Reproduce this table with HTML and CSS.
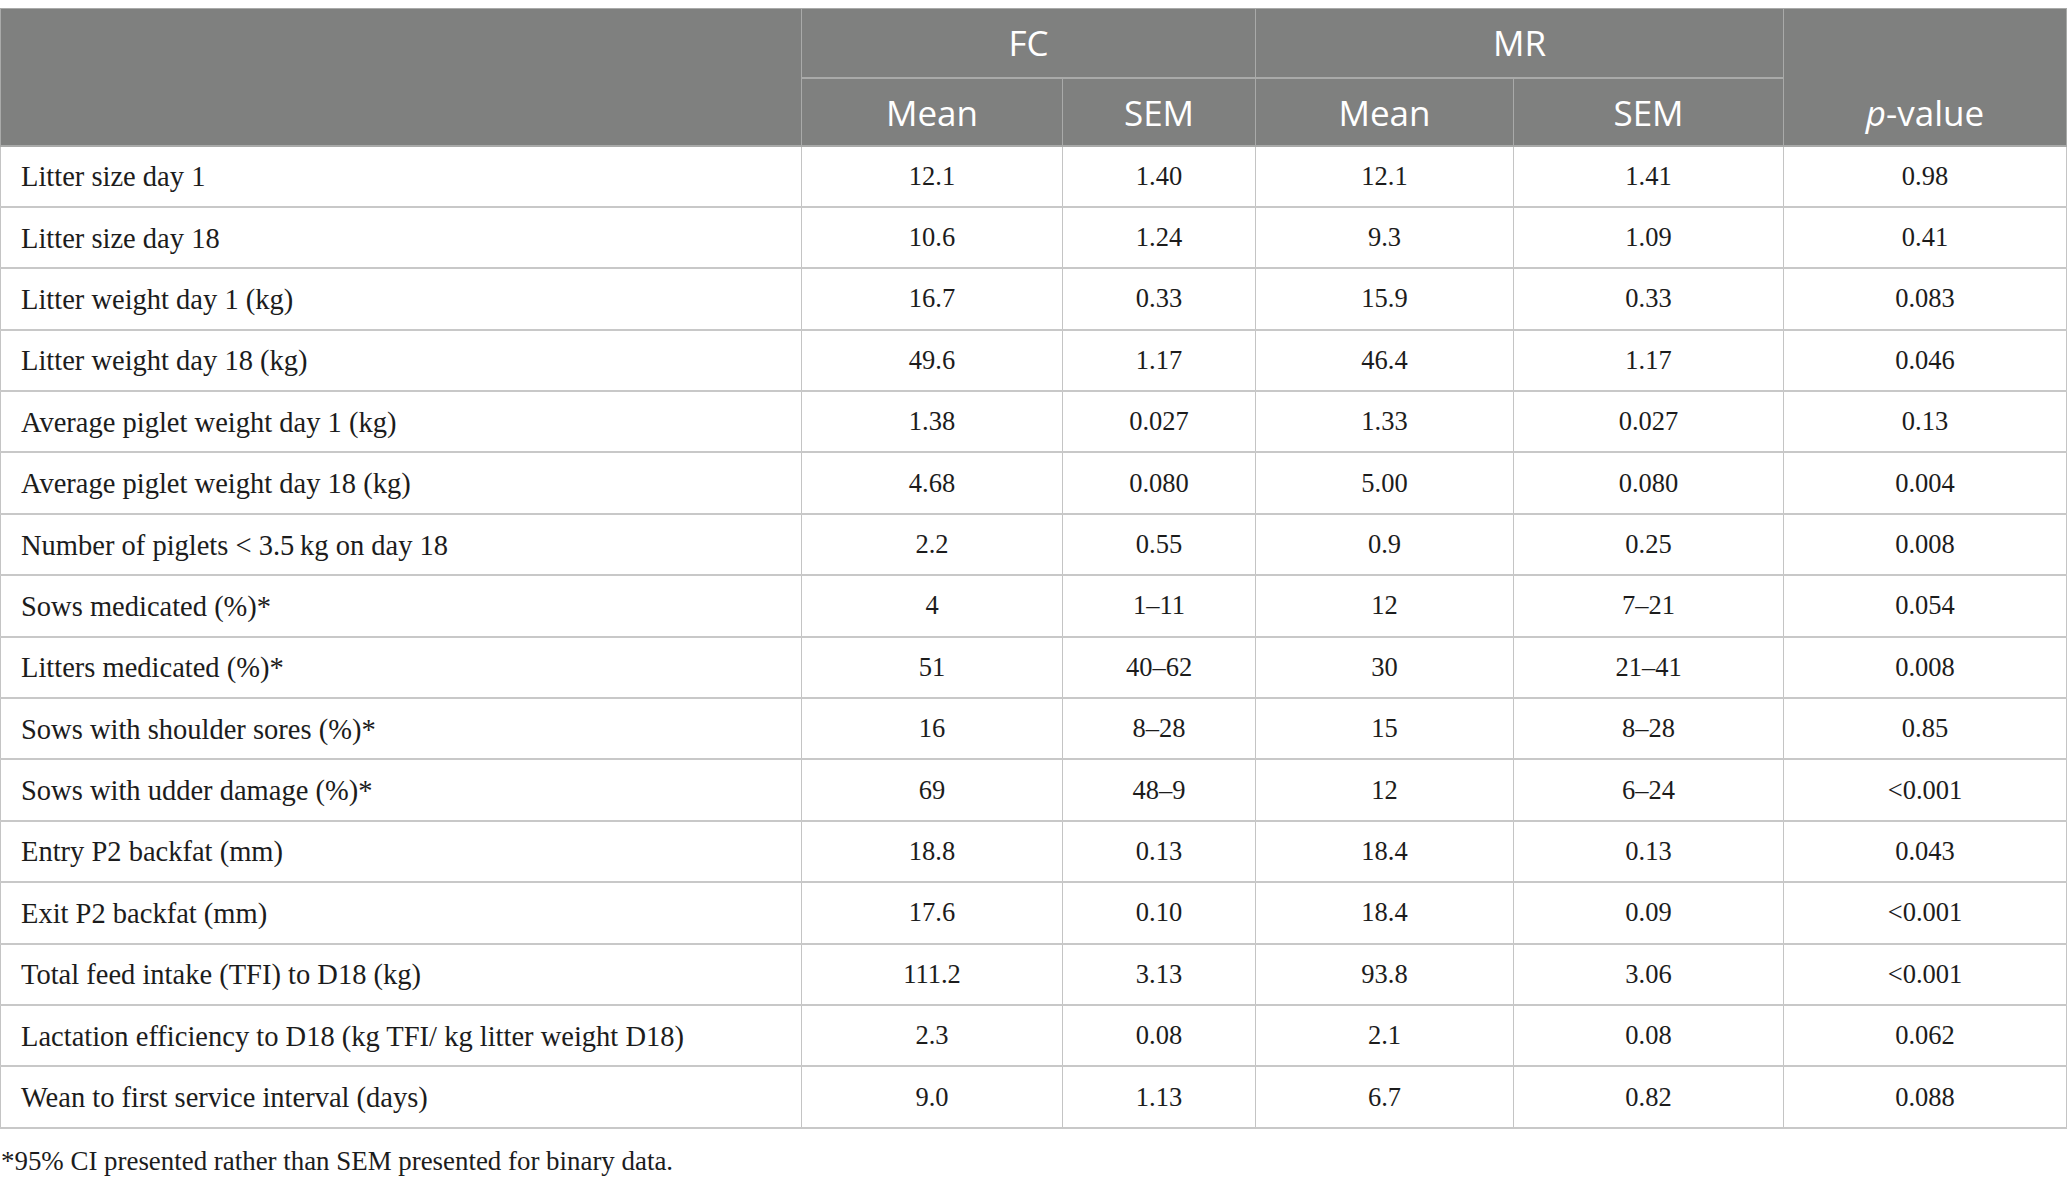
FILE: index.html
```html
<!DOCTYPE html>
<html lang="en">

<head>
    <meta charset="UTF-8">
    <meta name="viewport" content="width=device-width, initial-scale=1.0">
    <title>Sow and litter performance</title>
    <link rel="stylesheet" href="styles.css">
</head>

<body>
    <table class="data-table">
        <colgroup>
            <col class="col-label">
            <col class="col-fc-mean">
            <col class="col-fc-sem">
            <col class="col-mr-mean">
            <col class="col-mr-sem">
            <col class="col-p">
        </colgroup>
        <thead>
            <tr class="group-row">
                <th rowspan="2"></th>
                <th colspan="2">FC</th>
                <th colspan="2">MR</th>
                <th rowspan="2"><i>p</i>-value</th>
            </tr>
            <tr class="sub-row">
                <th>Mean</th>
                <th>SEM</th>
                <th>Mean</th>
                <th>SEM</th>
            </tr>
        </thead>
        <tbody>
            <tr><td>Litter size day 1</td><td>12.1</td><td>1.40</td><td>12.1</td><td>1.41</td><td>0.98</td></tr>
            <tr><td>Litter size day 18</td><td>10.6</td><td>1.24</td><td>9.3</td><td>1.09</td><td>0.41</td></tr>
            <tr><td>Litter weight day 1 (kg)</td><td>16.7</td><td>0.33</td><td>15.9</td><td>0.33</td><td>0.083</td></tr>
            <tr><td>Litter weight day 18 (kg)</td><td>49.6</td><td>1.17</td><td>46.4</td><td>1.17</td><td>0.046</td></tr>
            <tr><td>Average piglet weight day 1 (kg)</td><td>1.38</td><td>0.027</td><td>1.33</td><td>0.027</td><td>0.13</td></tr>
            <tr><td>Average piglet weight day 18 (kg)</td><td>4.68</td><td>0.080</td><td>5.00</td><td>0.080</td><td>0.004</td></tr>
            <tr><td>Number of piglets &lt; 3.5&thinsp;kg on day 18</td><td>2.2</td><td>0.55</td><td>0.9</td><td>0.25</td><td>0.008</td></tr>
            <tr><td>Sows medicated (%)*</td><td>4</td><td>1–11</td><td>12</td><td>7–21</td><td>0.054</td></tr>
            <tr><td>Litters medicated (%)*</td><td>51</td><td>40–62</td><td>30</td><td>21–41</td><td>0.008</td></tr>
            <tr><td>Sows with shoulder sores (%)*</td><td>16</td><td>8–28</td><td>15</td><td>8–28</td><td>0.85</td></tr>
            <tr><td>Sows with udder damage (%)*</td><td>69</td><td>48–9</td><td>12</td><td>6–24</td><td>&lt;0.001</td></tr>
            <tr><td>Entry P2 backfat (mm)</td><td>18.8</td><td>0.13</td><td>18.4</td><td>0.13</td><td>0.043</td></tr>
            <tr><td>Exit P2 backfat (mm)</td><td>17.6</td><td>0.10</td><td>18.4</td><td>0.09</td><td>&lt;0.001</td></tr>
            <tr><td>Total feed intake (TFI) to D18 (kg)</td><td>111.2</td><td>3.13</td><td>93.8</td><td>3.06</td><td>&lt;0.001</td></tr>
            <tr><td>Lactation efficiency to D18 (kg TFI/ kg litter weight D18)</td><td>2.3</td><td>0.08</td><td>2.1</td><td>0.08</td><td>0.062</td></tr>
            <tr><td>Wean to first service interval (days)</td><td>9.0</td><td>1.13</td><td>6.7</td><td>0.82</td><td>0.088</td></tr>
        </tbody>
    </table>

    <p class="footnote">*95% CI presented rather than SEM presented for binary data.</p>
</body>

</html>
```

FILE: styles.css
```css
body {
    margin: 0;
    background-color: white;
    font-family: "Liberation Serif", "Times New Roman", serif;
    color: #1c1c1c;
}

.data-table {
    width: 2066px;
    margin-top: 8px;
    border-collapse: collapse;
    table-layout: fixed;
    border-top: 1px solid #b4b4b4;
    border-bottom: 2px solid #b8b8b8;
}

.col-label { width: 801px; }
.col-fc-mean { width: 261px; }
.col-fc-sem { width: 193px; }
.col-mr-mean { width: 258px; }
.col-mr-sem { width: 270px; }
.col-p { width: 283px; }

.data-table th {
    background-color: #7f807f;
    color: white;
    font-family: "Open Sans", "Liberation Sans", sans-serif;
    font-size: 35px;
    font-weight: 400;
    line-height: 46px;
    text-align: center;
    vertical-align: bottom;
    height: 68px;
    padding: 0 0 9px;
    border: 1px solid #a9aaa9;
    border-bottom-width: 2px;
    box-sizing: border-box;
}

.group-row th {
    height: 69px;
    padding-bottom: 11px;
}

.group-row th:last-child {
    padding-bottom: 9px;
}

.data-table th i {
    font-style: italic;
}

.data-table td {
    height: 61.4px;
    padding: 0;
    text-align: center;
    vertical-align: middle;
    font-size: 26.5px;
    border-left: 1px solid #c4c4c4;
    border-right: 1px solid #c4c4c4;
    border-bottom: 2px solid #c8c8c8;
    box-sizing: border-box;
}

.data-table td:first-child {
    text-align: left;
    padding-left: 20px;
    font-size: 28.5px;
    padding-top: 2px;
}

.footnote {
    margin: 17px 0 0 1px;
    font-size: 26.9px;
    color: #1c1c1c;
}
```
